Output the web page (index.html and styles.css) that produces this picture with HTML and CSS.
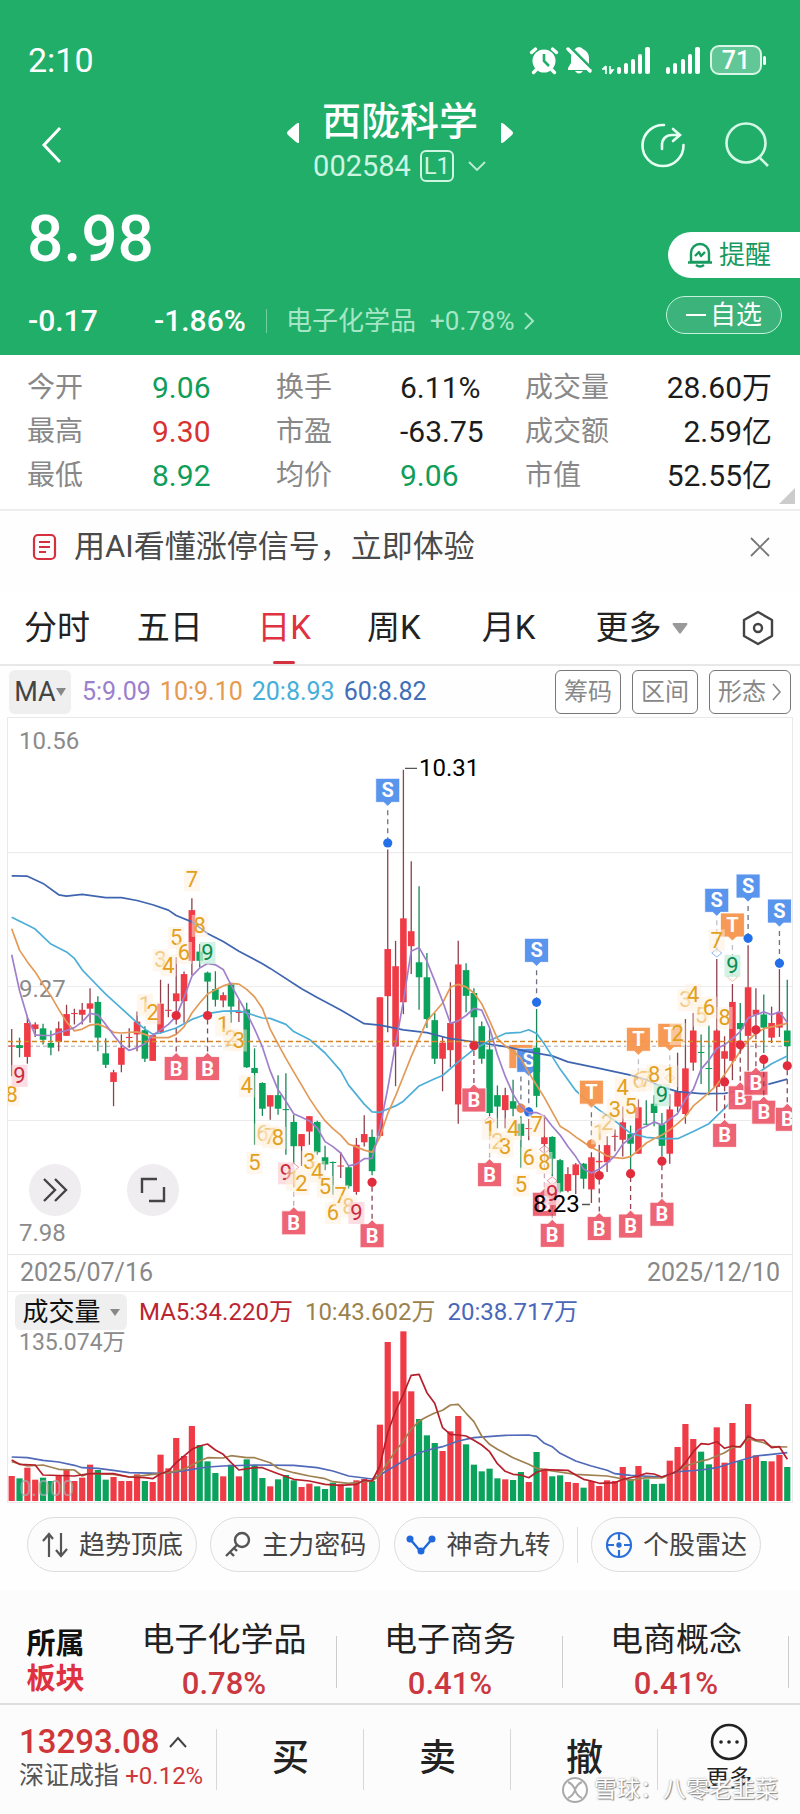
FILE: index.html
```
<!DOCTYPE html>
<html lang="zh-CN">
<head>
<meta charset="utf-8">
<meta name="viewport" content="width=device-width, initial-scale=1">
<title>西陇科学 002584</title>
<link rel="stylesheet" href="styles.css">
</head>
<body>
<header class="hero">
  <div class="status">
    <span class="clock">2:10</span>
    <div class="status-icons">
      <svg width="30" height="30" viewBox="0 0 30 30" fill="#fff"><circle cx="15" cy="16" r="11.500"/><path d="M2.500 7.500 6.500 4M27.500 7.500l-4-3.500M7 25l-2.500 2.500M23 25l2.500 2.500" stroke="#fff" stroke-width="3.400" stroke-linecap="round"/><path d="M15 9v7l5 5" stroke="#20ae69" stroke-width="2.600" fill="none"/></svg>
      <svg class="mute" width="26" height="30" viewBox="0 0 26 30" fill="#fff"><path d="M9 4q4-4 8 0c4 2 6 5 6 9v6l3 6H2v-2l3-5v-5c0-4 1-7 4-9zM9 26h8q-4 5-8 0z"/><path d="M4 2l22 22" stroke="#20ae69" stroke-width="3"/><path d="M2 4l22 22" stroke="#fff" stroke-width="3.400" stroke-linecap="round"/></svg>
      <svg class="sig" width="48" height="30" viewBox="0 0 48 30" fill="#fff"><path d="M4 21v8M8 21v8M4 21l-3 3h3M8 29l3-4H8" stroke="#fff" stroke-width="1.600" fill="none"/><rect x="15" y="22" width="4" height="7" rx="2"/><rect x="22" y="18" width="4" height="11" rx="2"/><rect x="29" y="14" width="4" height="15" rx="2"/><rect x="36" y="9" width="4" height="20" rx="2"/><rect x="43" y="2" width="5" height="27" rx="2"/></svg>
      <svg class="sig2" width="34" height="30" viewBox="0 0 34 30" fill="#fff"><rect x="0" y="22" width="4" height="7" rx="2"/><rect x="7" y="18" width="4" height="11" rx="2"/><rect x="15" y="14" width="4" height="15" rx="2"/><rect x="22" y="9" width="4" height="20" rx="2"/><rect x="29" y="2" width="5" height="27" rx="2"/></svg>
      <span class="battery">71</span>
    </div>
  </div>

  <nav class="nav">
    <button class="icon-btn back" aria-label="返回"><svg width="24" height="40" viewBox="0 0 24 40"><path d="M20 3 4 20l16 17" fill="none" stroke="#fff" stroke-width="3"/></svg></button>
    <button class="icon-btn step" aria-label="上一只"><svg width="14" height="22" viewBox="0 0 14 22"><path d="M13 1v20q-2 0-3-1L2 13q-2-2 0-4l8-7q1-1 3-1z" fill="#fff"/></svg></button>
    <div class="name">
      <h1>西陇科学</h1>
      <div class="code">002584 <span class="level">L1</span><svg width="20" height="12" viewBox="0 0 20 12"><path d="m2 2 8 8 8-8" fill="none" stroke="#bdeed5" stroke-width="1.8"/></svg></div>
    </div>
    <button class="icon-btn step" aria-label="下一只"><svg width="14" height="22" viewBox="0 0 14 22"><path d="M1 1v20q2 0 3-1l8-7q2-2 0-4L4 2Q3 1 1 1z" fill="#fff"/></svg></button>
    <div class="nav-actions">
      <button class="icon-btn" aria-label="分享"><svg width="46" height="46" viewBox="0 0 46 46" fill="none" stroke="#e8fff4" stroke-width="2.600" stroke-linecap="round"><path d="M24 3A20.500 20.500 0 1 0 43.500 23"/><path d="M22 27v-4c0-6 4-10 10-10h7M33 7l7 6-7 6"/></svg></button>
      <button class="icon-btn" aria-label="搜索"><svg width="46" height="46" viewBox="0 0 46 46" fill="none" stroke="#d5f8e6" stroke-width="2.600"><circle cx="22" cy="21" r="19.500"/><path d="m36 36 8 8"/></svg></button>
    </div>
  </nav>

  <div class="price-row">
    <strong class="price">8.98</strong>
    <button class="remind"><svg width="26" height="28" viewBox="0 0 26 28" fill="none" stroke="#179a5f" stroke-width="2.4" stroke-linejoin="round"><path d="M4 21v-9a9 9 0 0 1 18 0v9zM1 21.500h24M9 24q4 3 8 0"/><path d="m8 15 4-4 2 4 4-4"/></svg>提醒</button>
  </div>
  <div class="change-row">
    <span class="delta">-0.17</span>
    <span class="delta pct">-1.86%</span>
    <a class="sector-link" href="#sector"><span>电子化学品</span><span>+0.78%</span><svg width="12" height="20" viewBox="0 0 12 20"><path d="m2 2 8 8-8 8" fill="none" stroke="#a5e6c6" stroke-width="2"/></svg></a>
    <button class="watch"><span class="minus"></span>自选</button>
  </div>
</header>

<section class="stats">
  <span>今开</span><b class="down">9.06</b><span>换手</span><b>6.11%</b><span>成交量</span><b class="end">28.60万</b>
  <span>最高</span><b class="up">9.30</b><span>市盈</span><b>-63.75</b><span>成交额</span><b class="end">2.59亿</b>
  <span>最低</span><b class="down">8.92</b><span>均价</span><b class="down">9.06</b><span>市值</span><b class="end">52.55亿</b>
</section>

<section class="tip">
  <svg width="25" height="28" viewBox="0 0 25 28" fill="none" stroke="#d5303f" stroke-width="2.2"><rect x="2" y="2" width="21" height="24" rx="4"/><path d="M7 9h11M7 14h11M7 19h7"/></svg>
  <a href="#ai">用AI看懂涨停信号，立即体验</a>
  <button class="icon-btn" aria-label="关闭"><svg width="22" height="22" viewBox="0 0 22 22"><path d="m2 2 18 18M20 2 2 20" stroke="#777" stroke-width="1.8"/></svg></button>
</section>

<nav class="tabs">
  <button>分时</button><button>五日</button><button class="active">日K</button><button>周K</button><button>月K</button>
  <button>更多<svg width="16" height="11" viewBox="0 0 16 11"><path d="M1 0h14q1 1 0 2L9 10q-1 1-2 0L1 2Q0 1 1 0z" fill="#999"/></svg></button>
  <button aria-label="设置"><svg width="34" height="36" viewBox="0 0 34 36" fill="none" stroke="#444" stroke-width="2.4" stroke-linejoin="round"><path d="M17 2 31 10v16l-14 8-14-8V10z"/><circle cx="17" cy="18" r="4"/></svg></button>
</nav>

<div class="ma-bar">
  <button class="picker">MA<svg width="10" height="8" viewBox="0 0 10 8"><path d="M0 0h10L5 8z" fill="#888"/></svg></button>
  <div class="ma-values"><span class="m5">5:9.09</span><span class="m10">10:9.10</span><span class="m20">20:8.93</span><span class="m60">60:8.82</span></div>
  <button class="chip">筹码</button><button class="chip">区间</button>
  <button class="chip">形态<svg width="10" height="18" viewBox="0 0 10 18"><path d="m1 1 7 8-7 8" fill="none" stroke="#888" stroke-width="1.6"/></svg></button>
</div>

<main class="panel">
  <div class="kline">
    <svg id="kline" viewBox="8 0 784 536" role="img" aria-label="日K线"></svg>
    <div class="tools">
      <button class="round" aria-label="展开"><svg width="26" height="24" viewBox="0 0 26 24" fill="none" stroke="#444" stroke-width="2.4"><path d="m2 1 11 11L2 23M13 1l11 11-11 11"/></svg></button>
      <button class="round" aria-label="全屏"><svg width="26" height="26" viewBox="0 0 26 26" fill="none" stroke="#444" stroke-width="2.4"><path d="M2 16V2h15M24 10v14H9"/></svg></button>
    </div>
  </div>
  <div class="dates"><span>2025/07/16</span><span>2025/12/10</span></div>
  <div class="vol-head">
    <button class="picker">成交量<svg width="10" height="7" viewBox="0 0 10 7"><path d="M0 0h10L5 7z" fill="#888"/></svg></button>
    <span class="v5">MA5:34.220万</span><span class="v10">10:43.602万</span><span class="v20">20:38.717万</span>
  </div>
  <svg id="volume" viewBox="8 0 784 172" role="img" aria-label="成交量"></svg>
</main>

<div class="signals">
  <button><svg width="28" height="26" viewBox="0 0 28 26" fill="none" stroke="#555" stroke-width="2.2"><path d="M8 25V3M2 9l6-7 4 5M20 1v22M15 18l5 6 6-7"/></svg>趋势顶底</button>
  <button><svg width="28" height="28" viewBox="0 0 28 28" fill="none" stroke="#555" stroke-width="2.4"><circle cx="18" cy="9" r="7"/><path d="M13 14 2 25M6 21l4 4M10 17l3 3"/></svg>主力密码</button>
  <button><svg width="30" height="22" viewBox="0 0 30 22" fill="#1f68dd"><path d="m4 5 11 13L26 5" fill="none" stroke="#1f68dd" stroke-width="2.4"/><circle cx="4" cy="5" r="3.500"/><circle cx="15" cy="17" r="3.500"/><circle cx="26" cy="5" r="3.500"/></svg>神奇九转</button>
  <i class="rule"></i>
  <button><svg width="28" height="28" viewBox="0 0 28 28" fill="none" stroke="#2b70d8" stroke-width="2.2"><circle cx="14" cy="14" r="12"/><path d="M14 2v7M14 19v7M2 14h7M19 14h7"/><circle cx="14" cy="14" r="1.600" fill="#2b70d8"/></svg>个股雷达</button>
</div>

<section class="sectors" id="sector">
  <h2>所属<em>板块</em></h2>
  <a href="#s1">电子化学品<b>0.78%</b></a>
  <a href="#s2">电子商务<b>0.41%</b></a>
  <a href="#s3">电商概念<b>0.41%</b></a>
</section>

<footer class="trade">
  <div class="index">
    <strong>13293.08<svg width="20" height="14" viewBox="0 0 20 14"><path d="m2 12 8-9 8 9" fill="none" stroke="#444" stroke-width="2"/></svg></strong>
    <span>深证成指 <em>+0.12%</em></span>
  </div>
  <button>买</button><button>卖</button><button>撤</button>
  <button class="more"><svg width="40" height="40" viewBox="0 0 40 40"><circle cx="20" cy="20" r="17" fill="none" stroke="#222" stroke-width="2.6"/><g fill="#222"><circle cx="12" cy="20" r="1.800"/><circle cx="20" cy="20" r="1.800"/><circle cx="28" cy="20" r="1.800"/></g></svg>更多</button>
  <div class="watermark"><svg width="28" height="28" viewBox="0 0 28 28" fill="none" stroke="#aaa" stroke-width="2"><circle cx="14" cy="14" r="12" fill="#fff"/><path d="M7 6q5 2 7 8t7 8M21 6q-5 2-7 8t-7 8"/></svg>雪球：八零老韭菜</div>
</footer>
<script src="chart.js"></script>
</body>
</html>
```
FILE: styles.css
```
* { box-sizing: border-box; }
body { margin: 0; background: #fefefe; color: #222; font: 28px/36px Roboto, "Noto Sans CJK SC", sans-serif; }
button { font: inherit; color: inherit; background: none; border: 0; padding: 0; margin: 0; display: flex; align-items: center; justify-content: center; }
a { color: inherit; text-decoration: none; }
svg { display: block; flex: none; }
em { font-style: normal; }

.hero { background: #20ae69; color: #fff; padding-top: 40px; }
.status { display: flex; justify-content: space-between; align-items: center; height: 40px; padding: 0 38px 0 28px; }
.clock { font-size: 34px; }
.status-icons { display: flex; align-items: center; }
.mute { margin-left: 7px; }
.sig { margin-left: 10px; }
.sig2 { margin-left: 16px; }
.battery { position: relative; margin-left: 10px; width: 52px; height: 30px; border: 2px solid #d8f5e6; border-radius: 9px; background: #62c796; font-weight: 500; font-size: 25px; line-height: 27px; text-align: center; }
.battery::after { content: ""; position: absolute; right: -6px; top: 9px; width: 3px; height: 9px; border-radius: 2px; background: #fff; }

.nav { display: grid; grid-template-columns: 1fr auto 176px auto 1fr; align-items: center; column-gap: 12px; padding: 14px 30px 0; height: 110px; }
.nav .icon-btn { height: 46px; }
.nav .back { justify-self: start; margin: 6px 0 0 10px; }
.nav .step { margin-bottom: 18px; }
.name { text-align: center; }
h1 { margin: 0; font-size: 39px; font-weight: 500; line-height: 48px; }
.code { display: flex; align-items: center; justify-content: center; gap: 9px; color: #cdf5e1; white-space: nowrap; font-size: 29px; line-height: 40px; }
.level { border: 2px solid #cdf5e1; border-radius: 6px; width: 34px; height: 32px; font-size: 24px; line-height: 28px; text-align: center; }
.code svg { margin-left: 4px; }
.nav-actions { display: flex; gap: 38px; justify-content: flex-end; margin-top: 6px; }

.price-row { display: flex; justify-content: space-between; align-items: center; height: 94px; padding: 6px 0 0 27px; }
.price { font-size: 64px; line-height: 80px; font-weight: 500; }
.remind { margin-top: 30px; width: 132px; height: 46px; gap: 6px; border-radius: 24px 0 0 24px; background: #fff; color: #179a5f; font-size: 26px; padding-right: 10px; }
.change-row { display: flex; align-items: center; padding: 2px 18px 11px 28px; height: 71px; }
.delta { font-size: 30px; font-weight: 500; width: 126px; padding-top: 11px; line-height: 40px; }
.pct { width: 112px; }
.sector-link { display: flex; align-items: center; gap: 14px; margin-top: 12px; padding-left: 19px; border-left: 1px solid #6fd0a0; line-height: 24px; font-size: 26px; color: #a5e6c6; }
.sector-link svg { margin-left: -6px; }
.watch { margin-left: auto; width: 116px; height: 38px; border: 1px solid #c4f2dc; border-radius: 20px; background: #3bb37b; font-size: 26px; gap: 4px; }
.minus { width: 20px; height: 2px; background: #fff; }

.stats { position: relative; display: grid; grid-template-columns: 125fr 124fr 124fr 125fr 115fr 132fr; row-gap: 8px; padding: 15px 28px 15px 27px; border-bottom: 2px solid #ededed; background: #fff; color: #888; }
.stats::after { content: ""; position: absolute; right: 5px; bottom: 5px; border: 8px solid #ccc; border-top-color: transparent; border-left-color: transparent; }
.stats b { font-weight: 400; color: #1c1c1c; font-size: 30px; white-space: nowrap; }
.stats .down { color: #0f9d5a; }
.stats .up { color: #d8332f; }
.stats .end { text-align: right; }

.tip { display: flex; align-items: center; gap: 17px; height: 81px; padding: 0 29px 10px 32px; font-size: 31px; color: #4a4a4a; }
.tip .icon-btn { margin-left: auto; }

.tabs { display: grid; grid-template-columns: 113fr 121fr 110fr 115fr 114fr 146fr 31fr; height: 74px; padding: 0 25px 0 24px; border-bottom: 2px solid #e8e8e8; background: #fff; font-size: 33px; }
.tabs button { position: relative; justify-self: start; gap: 11px; }
.tabs .active { color: #e03140; }
.tabs .active::after { content: ""; position: absolute; bottom: 0; left: 50%; width: 22px; height: 3px; margin-left: -11px; border-radius: 2px; background: #d5303f; }

.ma-bar { display: flex; align-items: center; gap: 11px; height: 51px; padding: 0 9px 0 9px; }
.picker { background: #efefef; border-radius: 6px; }
.ma-bar .picker { width: 62px; height: 44px; font-size: 27px; color: #444; }
.ma-values { display: flex; gap: 9px; margin-right: auto; font-size: 25px; }
.m5 { color: #9b7fcb; } .m10 { color: #e59a50; } .m20 { color: #46aeda; } .m60 { color: #416fb8; }
.chip { border: 1px solid #777; border-radius: 6px; height: 44px; padding: 0 8px; color: #888; font-size: 24px; gap: 6px; background: #fff; }

.panel { margin: 0 7px; border: 1px solid #e9e9e9; background: #fff; }
.panel > svg, .kline > svg { width: 100%; height: auto; }
.kline { position: relative; border-bottom: 1px solid #e6e6e6; }
.tools { position: absolute; left: 21px; bottom: 38px; display: flex; gap: 46px; }
.round { width: 52px; height: 52px; border-radius: 50%; background: #efedef; }
.dates { display: flex; justify-content: space-between; padding: 0 12px; font-size: 25px; line-height: 36px; color: #888; border-bottom: 1px solid #ececec; }
.vol-head { display: flex; align-items: center; gap: 12px; height: 38px; padding: 2px 7px 0; font-size: 24px; line-height: 36px; }
.vol-head .picker { width: 112px; height: 36px; font-size: 26px; color: #111; gap: 9px; }
.v5 { color: #bb2530; } .v10 { color: #9b824b; } .v20 { color: #4a67ba; }

.signals { display: flex; justify-content: space-between; align-items: center; padding: 14px 39px 0 27px; font-size: 26px; color: #444; }
.signals button { width: 170px; height: 55px; gap: 10px; border: 1px solid #dcdcdc; border-radius: 28px; background: #fdfcfd; }
.rule { width: 1px; height: 36px; background: #ddd; }

.sectors { display: grid; grid-template-columns: 111px repeat(3, 226fr) 11fr; align-items: center; margin-top: 18px; height: 113px; padding-top: 30px; text-align: center; background: #fdfcfd; }
.sectors h2 { display: grid; margin: 0; font-size: 29px; font-weight: 700; line-height: 35px; color: #111; }
.sectors em { color: #e03140; }
.sectors a { display: grid; row-gap: 4px; font-size: 33px; line-height: 40px; background: linear-gradient(#ccc, #ccc) right center / 1px 52px no-repeat; }
.sectors b { font-size: 31px; font-weight: 500; color: #cc3840; }

.trade { position: relative; display: grid; grid-template-columns: 217fr repeat(3, 147fr) 142fr; height: 111px; padding-bottom: 1px; border-top: 2px solid #dedede; background: #fdfcfd; }
.trade > * { display: flex; background: linear-gradient(#d8d8d8, #d8d8d8) right center / 1px 61px no-repeat; }
.index { flex-direction: column; justify-content: center; padding-left: 19px; font-size: 25px; line-height: 34px; color: #555; white-space: nowrap; }
.index strong { display: flex; align-items: center; gap: 9px; font-size: 33px; font-weight: 500; color: #cf3638; }
.index em { color: #cf3638; font-size: 24px; }
.trade button { font-size: 37px; font-weight: 500; }
.trade .more { flex-direction: column; font-size: 23px; font-weight: 400; line-height: 34px; background: none; }
.trade .watermark { position: absolute; right: 22px; bottom: 8px; display: flex; align-items: center; gap: 5px; font-size: 23px; line-height: 32px; color: #fff; text-shadow: 1px 1px 1px #888, 0 0 2px #999; background: none; }
```
FILE: chart.js
```
const NS = 'http://www.w3.org/2000/svg';
const RED = '#ef3b46', GREEN = '#0ba35c';
const STEP = 7.834, FIRST = 11.7;
const xAt = i => FIRST + i * STEP;

function add(parent, tag, attrs, text) {
  const el = document.createElementNS(NS, tag);
  for (const k in attrs) el.setAttribute(k, attrs[k]);
  if (text !== undefined) el.textContent = text;
  parent.appendChild(el);
  return el;
}

// direction, high, body top, body bottom, low, volume level
const bars = `r 893 939 942 1025 675|g 917 938 946 972 682|r 855 876 971 990 650|r 874 880 893 915 686|g 878 891 923 936 680
g 897 932 945 966 690|r 872 891 929 955 672|r 825 851 912 912 655|r 836 848 851 880 690|r 820 839 853 880 680
r 779 821 836 875 641|g 801 817 917 955 657|g 919 961 993 1002 686|r 1007 1014 1041 1109 678|r 908 945 993 1014 690
r 891 915 918 945 690|r 844 872 908 955 670|g 885 896 976 985 690|r 908 910 982 982 693|r 755 822 902 905 611
r 766 839 842 860 652|r 692 793 815 850 561|r 732 739 815 875 615|r 527 560 702 742 525|g 655 676 702 720 582
g 732 735 760 850 631|g 731 781 811 830 666|r 790 798 813 832 676|g 766 768 830 875 641|r 812 844 848 873 676
g 819 838 1000 1002 625|g 947 1002 1016 1217 642|g 1042 1044 1116 1136 681|r 1078 1078 1110 1147 706|g 1022 1078 1116 1133 685
g 1017 1117 1120 1245 672|g 1133 1153 1221 1270 688|r 1187 1187 1221 1276 708|r 1137 1137 1180 1217 698|g 1150 1153 1238 1245 706
g 1220 1252 1272 1288 714|g 1264 1265 1268 1357 695|r 1238 1275 1278 1310 700|g 1275 1280 1333 1340 710|r 1198 1217 1349 1357 688
r 1134 1187 1210 1222 684|g 1174 1195 1291 1302 690|r 804 804 1192 1192 521|r 390 669 801 902 273|r 646 717 942 1053 421
r 167 583 818 851 241|r 423 619 661 739 421|g 493 706 748 839 504|g 680 748 865 890 553|g 848 868 976 991 576
r 915 931 976 1067 600|r 762 876 952 1000 541|r 646 712 1104 1158 495|g 709 728 800 846 580|g 779 792 860 931 641
g 872 885 976 990 661|g 893 950 1128 1137 653|g 1051 1078 1110 1171 682|r 1057 1078 1120 1171 685|g 1035 1095 1116 1137 687
g 1137 1158 1192 1281 663|r 1145 1170 1173 1204 693|g 837 945 1080 1112 603|r 1134 1196 1215 1245 653|g 1193 1195 1256 1305 676
g 1257 1260 1348 1351 673|r 1280 1299 1346 1350 693|r 1268 1272 1302 1355 696|g 1268 1270 1312 1340 710|r 1238 1252 1342 1380 690
r 1217 1262 1266 1293 705|r 1193 1218 1266 1293 688|r 1174 1192 1195 1235 690|r 1110 1154 1203 1250 648|g 1163 1187 1214 1285 685
r 1090 1112 1242 1242 645|g 1092 1158 1161 1160 685|g 1078 1102 1128 1165 699|g 1128 1160 1220 1250 698|r 1075 1118 1242 1270 629
r 959 1068 1110 1125 588|r 865 1003 1131 1158 519|r 848 897 987 1010 564|g 908 957 960 1047 602|g 883 1002 1005 1078 640
r 697 897 1055 1123 529|r 913 955 976 1030 635|r 767 817 982 1036 516|g 820 876 893 925 630|r 658 776 912 1040 459
r 779 839 853 890 613|g 796 852 889 960 630|r 830 876 917 932 631|r 725 845 889 915 612|g 755 897 941 985 648`
  .split(/[|\n]/).map(s => { const [d, ...n] = s.split(' '); return [d, ...n.map(Number)]; });

const priceLines = [
  ['#3f65b0', '0:464 2:465 4:485 6:517 7:521 9:516 12:525 14:525 16:533 18:545 20:560 21:575 23:593 25:625 27:648 29:675 32:710 33:723 37:780 39:805 42:840 45:878 47:882 50:895 53:903 56:920 60:932 63:942 66:957 69:968 71:985 75:1003 79:1022 81:1035 83:1055 85:1068 88:1074 91:1073 94:1062 97:1045 99:1033'],
  ['#4dafd8', '0:580 2:602 3:613 5:655 7:677 8:695 9:727 10:750 12:795 14:835 16:875 17:893 18:907 19:904 21:890 23:866 25:850 27:843 29:842 30:848 32:862 33:863 35:880 36:900 38:922 40:960 42:1010 43:1050 45:1103 46:1125 47:1126 49:1108 50:1095 52:1052 54:1032 55:1023 57:985 59:950 61:925 63:905 65:902 66:895 67:905 68:935 70:1005 72:1065 73:1085 75:1120 77:1150 79:1185 81:1196 83:1200 85:1200 87:1180 89:1158 91:1115 93:1070 95:1020 97:990 99:968'],
  ['#e39a58', '0:612 1:672 2:705 3:733 4:768 5:800 6:838 7:873 8:898 9:893 10:882 11:879 12:888 13:902 14:904 16:901 17:908 18:917 20:917 21:908 22:887 23:848 24:820 25:795 26:783 27:772 28:765 29:767 30:782 31:803 32:835 33:893 34:935 35:975 36:1013 37:1050 38:1087 39:1120 40:1150 41:1172 42:1190 43:1215 44:1223 45:1232 46:1238 47:1195 48:1130 49:1080 50:1025 51:970 52:920 53:870 54:846 55:820 56:776 57:768 58:775 59:792 60:822 61:870 62:920 63:940 64:955 65:975 66:1015 68:1085 70:1165 71:1178 72:1195 73:1210 74:1225 75:1235 76:1248 77:1253 78:1255 79:1250 80:1232 81:1212 82:1200 83:1190 84:1175 85:1158 86:1138 87:1108 88:1090 89:1070 90:1050 91:1020 92:988 93:955 94:925 95:905 96:892 97:887 98:882 99:877'],
  ['#a080cc', '0:685 1:785 2:860 3:909 4:911 5:911 6:902 7:897 8:889 9:873 10:849 11:853 12:880 13:910 14:937 15:953 16:945 17:934 18:910 19:896 20:880 21:857 22:805 23:745 24:722 25:709 26:713 27:726 28:770 29:809 30:848 31:893 32:943 33:1010 34:1063 35:1095 36:1130 37:1140 38:1150 39:1170 40:1208 41:1222 42:1240 43:1276 44:1271 45:1256 46:1255 47:1170 48:1060 49:935 50:815 51:675 52:665 53:703 54:758 55:815 56:877 57:870 58:855 59:835 60:840 61:890 62:965 63:1025 64:1075 65:1110 66:1127 67:1127 68:1137 69:1165 70:1190 71:1222 72:1250 73:1285 74:1296 75:1285 76:1268 77:1248 78:1215 79:1198 80:1175 81:1165 82:1153 83:1162 84:1145 85:1130 86:1090 87:1062 88:1005 89:980 90:947 91:937 92:920 93:900 94:862 95:853 96:845 97:853 98:845 99:875']
];
const volumeLines = [
  ['#5069b8', '0:618 2:620 4:628 6:633 8:643 9:650 11:652 13:658 15:665 19:667 21:663 23:655 25:648 27:645 31:642 36:643 39:650 41:660 43:675 46:684 47:672 48:658 50:630 52:605 54:592 55:587 57:570 59:560 63:553 66:552 67:556 68:577 69:587 70:607 72:630 74:645 76:658 77:668 79:673 83:678 85:662 88:657 90:650 92:635 94:622 95:615 97:610 99:605'],
  ['#a08050', '0:632 2:645 4:642 6:655 8:657 9:675 10:667 13:670 15:678 17:673 18:670 20:665 22:655 24:630 25:620 27:621 28:614 30:620 31:620 33:635 34:652 36:665 38:675 40:683 41:692 43:697 46:690 47:672 48:635 49:600 50:570 51:535 52:510 53:497 54:486 55:478 56:462 57:460 58:487 59:512 60:555 61:580 62:595 64:620 66:640 67:652 69:660 72:670 76:675 79:688 81:680 83:681 85:660 86:645 88:630 89:625 91:605 92:590 93:586 94:562 95:570 96:575 97:587 99:588'],
  ['#b5202c', '0:627 1:640 3:642 4:672 8:675 10:668 13:668 15:678 17:680 18:683 19:668 20:660 21:635 23:595 24:585 25:579 26:597 27:610 28:635 29:657 31:650 32:650 34:668 36:685 38:690 40:700 42:703 44:700 45:688 46:690 47:645 48:545 49:480 50:430 51:373 52:370 53:425 54:457 55:530 56:550 57:552 58:555 59:568 60:582 61:602 62:638 63:661 64:670 65:672 66:680 67:664 68:656 71:658 72:672 73:685 74:690 75:697 77:695 78:685 80:675 81:667 82:669 83:678 84:670 85:660 86:635 87:602 88:578 89:580 90:572 91:592 92:585 93:588 94:555 95:567 96:567 97:590 98:587 99:625']
];

function drawLines(svg, lines, y) {
  for (const [color, data] of lines) {
    const points = data.split(' ').map(p => { const [i, v] = p.split(':').map(Number); return xAt(i).toFixed(1) + ',' + y(v).toFixed(1); }).join(' ');
    add(svg, 'polyline', { points, fill: 'none', stroke: color, 'stroke-width': 1.7, 'stroke-linejoin': 'round' });
  }
}

const k = document.getElementById('kline');
const py = v => (v - 22) / 2.8;
const tone = { S: '#4f8dec', B: '#ec5b6b', T: '#f5944b' };
const dotTone = { S: '#2470e8', B: '#e12c3d', T: '#f0874a' };

// trade tag: letter, bar index, box top, anchor level, anchor is a plain dot
function tag([letter, i, top, dot, solid = 1]) {
  const x = xAt(i), t = py(top), d = py(dot), g = add(k, 'g', {});
  const up = letter === 'B';
  add(g, 'line', { x1: x, x2: x, y1: up ? t - 5 : t + 32, y2: d, stroke: up ? '#8e4453' : '#6b7280', 'stroke-width': 1.3, 'stroke-dasharray': '5 4', opacity: solid ? 1 : .45 });
  if (solid) add(g, 'circle', { cx: x, cy: d, r: 4.6, fill: dotTone[letter] });
  else add(g, 'path', { d: `M${x - 5} ${d}l5-4 5 4-5 4z`, fill: '#fff', stroke: dotTone[letter], opacity: .5 });
  const shape = up
    ? `M${x - 12} ${t}h8l4-4 4 4h8v24h-24z`
    : `M${x - 12} ${t}h24v24h-8l-4 4-4-4h-8z`;
  add(g, 'path', { d: shape, fill: tone[letter], stroke: '#fff', 'stroke-width': .8, 'fill-opacity': .94 });
  add(g, 'text', { x, y: t + 19, 'text-anchor': 'middle', 'font-size': 20, 'font-weight': 700, fill: '#fff' }, letter);
}

for (const v of [399, 774, 1149]) add(k, 'line', { x1: 8, x2: 792, y1: py(v), y2: py(v), stroke: '#ebebeb' });
[['10.56', 84], ['9.27', 778], ['7.98', 1460]].forEach(([t, v]) => add(k, 'text', { x: 19, y: py(v) + 9, 'font-size': 24, fill: '#8b8b8b' }, t));
add(k, 'line', { x1: 8, x2: 792, y1: py(941), y2: py(941), stroke: '#aaa', 'stroke-dasharray': '4 3' });
tag(['T', 65, 936, 1115]);
tag(['S', 66, 947, 1125]);

bars.forEach(([d, h, t, b, l], i) => {
  const x = xAt(i), r = d === 'r';
  add(k, 'line', { x1: x, x2: x, y1: py(h), y2: py(l), stroke: r ? '#90404b' : '#188655', 'stroke-width': 1.3 });
  add(k, 'rect', { x: x - 3.3, y: py(t), width: 6.6, height: py(b) - py(t), fill: r ? RED : GREEN });
});
drawLines(k, priceLines, py);
add(k, 'line', { x1: 8, x2: 792, y1: py(928), y2: py(928), stroke: '#d88424', 'stroke-width': 1.6, 'stroke-dasharray': '5 3' });

[['B', 21, 970, 855], ['B', 25, 970, 855], ['B', 36, 1402, 1280, 0], ['B', 46, 1438, 1322], ['S', 48, 191, 372], ['B', 59, 1058, 940],
 ['B', 61, 1267, 1150, 0], ['S', 67, 639, 818], ['B', 68, 1350, 1230, 0], ['B', 69, 1437, 1318, 0], ['T', 74, 1036, 1215], ['B', 75, 1418, 1303],
 ['B', 79, 1411, 1298], ['T', 80, 888, 1040, 0], ['T', 84, 877, 1030, 0], ['B', 83, 1378, 1263], ['S', 90, 499, 680, 0], ['T', 92, 568, 748, 0],
 ['B', 91, 1157, 1041], ['B', 93, 1052, 937], ['B', 95, 1011, 895], ['B', 96, 1092, 978], ['B', 99, 1112, 996],
 ['S', 94, 459, 639], ['S', 98, 529, 709]].forEach(tag);

// nine-turn counts: digit, bar index, level, optional style (f faint, r red, g green)
`8 0 1078|9 1 1024 r|1 17 825 f|2 18 849|3 19 700 f|4 20 715|5 21 638|6 22 680|7 23 476|8 24 604|9 25 680 g|1 27 882|2 28 922 f|3 29 925|4 30 1053|5 31 1268|6 32 1188 f|7 33 1195 f|8 34 1198|9 35 1297 r|1 36 1315 f|2 37 1327|3 38 1265|4 39 1293|5 40 1335|6 41 1408|7 42 1360|8 43 1390 f|9 44 1408 r|1 61 1172|2 62 1210 f|3 63 1222|4 64 1173|5 65 1330|6 66 1255|7 67 1162|8 68 1268|9 69 1355 r|1 75 1185 f|2 76 1155 f|3 77 1120|4 78 1057|5 79 1112|6 80 1038 f|7 81 1035 f|8 82 1022|9 83 1078 g|1 84 1025|2 85 907|3 86 812 f|4 87 797|5 88 855 f|6 89 833|7 90 645|8 91 862|9 92 716 g`
  .split('|').forEach(s => {
    const [n, i, v, m] = s.split(' ');
    const x = xAt(+i), y = py(+v);
    const [fill, back] = m === 'r' ? ['#c92c3d', '#fbd3d8'] : m === 'g' ? ['#0c8c50', '#c6eeda'] : ['#e2a01c', '#fff0dc'];
    add(k, 'rect', { x: x - 8, y: y - 11, width: 16, height: 22, fill: back, opacity: m === 'r' || m === 'g' ? .75 : .5 });
    add(k, 'text', { x, y: y + 7, 'text-anchor': 'middle', 'font-size': 22, fill, opacity: m === 'f' ? .5 : 1 }, n);
  });

add(k, 'path', { d: `M405 ${py(163)}h12M582 ${py(1384)}h8`, stroke: '#555', 'stroke-width': 1.4 });
add(k, 'text', { x: 419, y: py(160) + 9, 'font-size': 24, fill: '#000' }, '10.31');
add(k, 'text', { x: 533, y: py(1380) + 9, 'font-size': 24, fill: '#000' }, '8.23');

const vol = document.getElementById('volume');
const vy = v => v / 3 - 79;
bars.forEach((b, i) => {
  add(vol, 'rect', { x: xAt(i) - 3.1, y: vy(b[5]), width: 6.2, height: vy(750) - vy(b[5]), fill: b[0] === 'r' ? RED : GREEN });
});
drawLines(vol, volumeLines, vy);
add(vol, 'text', { x: 19, y: 20, 'font-size': 23, fill: '#8b8b8b' }, '135.074万');
add(vol, 'text', { x: 19, y: 166, 'font-size': 22, fill: '#aaa', 'fill-opacity': .75 }, '0.000');
```
